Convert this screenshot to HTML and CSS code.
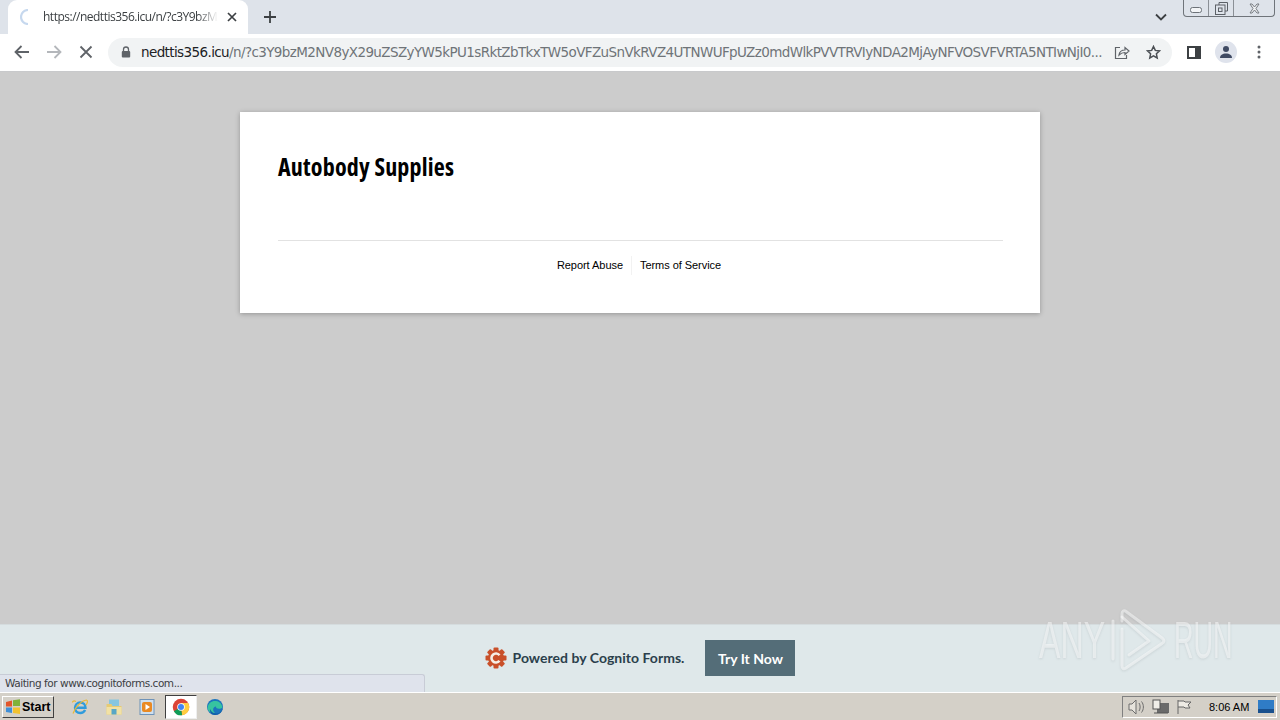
FILE: index.html
```html
<!DOCTYPE html>
<html lang="en">
<head>
<meta charset="utf-8">
<title>Autobody Supplies</title>
<link rel="stylesheet" href="styles.css">
</head>
<body>
<div class="screen">
  <header class="tabstrip">
    <div class="tab">
      <svg class="spinner" width="16" height="16" viewBox="0 0 16 16"><path d="M8 1A7 7 0 0 0 8 15" fill="none" stroke="#c6d8ee" stroke-width="2.200"/></svg>
      <span class="tab-title">https://nedttis356.icu/n/?c3Y9bzM2N</span>
      <svg class="tab-close" width="10" height="10" viewBox="0 0 10 10"><path d="M1 1l8 8M9 1L1 9" stroke="#3c4043" stroke-width="1.700"/></svg>
    </div>
    <svg class="newtab" width="12" height="12" viewBox="0 0 12 12"><path d="M6 0v12M0 6h12" stroke="#3c4043" stroke-width="1.800"/></svg>
    <svg class="tabsearch" width="12" height="8" viewBox="0 0 12 8"><path d="M1 1.500l5 5 5-5" fill="none" stroke="#3c4043" stroke-width="1.800"/></svg>
  </header>
  <div class="winctl">
    <div class="winbtn btn-min"><svg width="12" height="6" viewBox="0 0 12 6"><rect x=".5" y=".5" width="11" height="5" rx="2" fill="#f2f4f6" stroke="#6d7278"/></svg></div>
    <div class="winbtn btn-max"><svg width="13" height="13" viewBox="0 0 13 13"><path d="M4 3V.5h8.500V9H10" fill="none" stroke="#5c6167"/><rect x=".5" y="3" width="9.500" height="9.500" fill="none" stroke="#5c6167"/><rect x="3.500" y="6" width="3.500" height="3.500" fill="none" stroke="#5c6167"/></svg></div>
    <div class="winbtn btn-close"><svg width="13" height="11" viewBox="0 0 13 11"><path d="M2 1h2l2.500 3L9 1h2L8 5.500l3 4.500H9L6.500 7 4 10H2l3-4.500z" fill="#eef0f2" stroke="#777c82"/></svg></div>
  </div>

  <nav class="toolbar">
    <svg class="nav-icon" width="16" height="14" viewBox="0 0 16 14"><path d="M15 7H2M7.500 1L1.500 7l6 6" fill="none" stroke="#5f6368" stroke-width="1.800"/></svg>
    <svg class="nav-icon" width="16" height="14" viewBox="0 0 16 14"><path d="M1 7h13M8.500 1l6 6-6 6" fill="none" stroke="#b4b7bb" stroke-width="1.800"/></svg>
    <svg class="nav-icon" width="14" height="14" viewBox="0 0 14 14"><path d="M1.500 1.500l11 11M12.500 1.500l-11 11" stroke="#5f6368" stroke-width="1.800"/></svg>
    <div class="omnibox">
      <svg class="lock" width="10" height="12" viewBox="0 0 10 12"><path d="M2.500 5V3.500a2.500 2.500 0 0 1 5 0V5" fill="none" stroke="#5f6368" stroke-width="1.300"/><rect x=".8" y="5" width="8.400" height="6.500" rx="1" fill="#5f6368"/></svg>
      <div class="url"><span class="url-host">nedttis356.icu</span>/n/?c3Y9bzM2NV8yX29uZSZyYW5kPU1sRktZbTkxTW5oVFZuSnVkRVZ4UTNWUFpUZz0mdWlkPVVTRVIyNDA2MjAyNFVOSVFVRTA5NTIwNjI0...</div>
      <svg class="omni-icon share" width="16" height="15" viewBox="0 0 16 15"><path d="M6 2.500H1.500v11h11V10" fill="none" stroke="#5f6368" stroke-width="1.200"/><path d="M5 10c.5-3.500 3-5 6-5V2.500L15 6l-4 3.500V7.500c-2.500 0-4.500 1-6 2.500z" fill="none" stroke="#5f6368" stroke-width="1.200"/></svg>
      <svg class="omni-icon star" width="15" height="15" viewBox="0 0 15 15"><path d="M7.500 1.500l1.800 3.900 4.200.5-3.100 2.900.8 4.200-3.700-2.100-3.700 2.100.8-4.200L1.500 5.900l4.200-.5z" fill="none" stroke="#4b4f54" stroke-width="1.500"/></svg>
    </div>
    <svg class="side-icon" width="14" height="13" viewBox="0 0 14 13"><rect x="1" y="1" width="12" height="11" fill="none" stroke="#3c4043" stroke-width="2"/><rect x="8" y="1" width="5" height="11" fill="#3c4043"/></svg>
    <div class="avatar"><svg width="14" height="12" viewBox="0 0 14 12"><circle cx="7" cy="3" r="3" fill="#3f4a63"/><path d="M1 12c0-3 2.500-4.500 6-4.500s6 1.500 6 4.500z" fill="#3f4a63"/></svg></div>
    <svg class="menu-icon" width="4" height="14" viewBox="0 0 4 14"><circle cx="2" cy="2" r="1.500" fill="#5f6368"/><circle cx="2" cy="7" r="1.500" fill="#5f6368"/><circle cx="2" cy="12" r="1.500" fill="#5f6368"/></svg>
  </nav>

  <main class="viewport">
    <section class="card">
      <h1 class="card-title">Autobody Supplies</h1>
      <footer class="card-footer">
        <a class="card-link">Report Abuse</a>
        <span class="card-sep"></span>
        <a class="card-link">Terms of Service</a>
      </footer>
    </section>
  </main>

  <aside class="banner">
    <svg class="cog" width="22" height="22" viewBox="0 0 22 22">
      <g fill="#c9502a"><circle cx="11" cy="11" r="8"/><rect x="8.500" y="0.500" width="5" height="21" rx="1"/><rect x="0.500" y="8.500" width="21" height="5" rx="1"/><rect x="8.500" y="0.500" width="5" height="21" rx="1" transform="rotate(45 11 11)"/><rect x="8.500" y="0.500" width="5" height="21" rx="1" transform="rotate(-45 11 11)"/></g>
      <path d="M14.500 8.200a4.500 4.500 0 1 0 0 5.600" fill="none" stroke="#f6efe6" stroke-width="2.600"/>
    </svg>
    <span class="banner-text">Powered by Cognito Forms.</span>
    <a class="banner-btn">Try It Now</a>
  </aside>

  <div class="status">Waiting for www.cognitoforms.com...</div>

  <div class="watermark">
    <span class="wm-any">ANY</span>
    <svg class="wm-play" width="62" height="64" viewBox="0 0 62 64"><g fill="none" stroke="#fff" stroke-opacity=".5" stroke-width="3" stroke-linejoin="round" stroke-linecap="round"><path d="M8 12v38"/><path d="M17 12V5c0-3 2-4 4-2.500L57 29c2.500 2 2.500 4 0 5.500L21 59c-2.500 1.500-4 .5-4-2.500V20"/><path d="M17 8l27 24-20 14"/></g></svg>
    <span class="wm-run">RUN</span>
  </div>

  <footer class="taskbar">
    <div class="start">
      <svg width="16" height="16" viewBox="0 0 16 16"><path d="M1 3l6-1.500V7.500H1z" fill="#e2562b"/><path d="M8 1.200l7-1V7H8z" fill="#7fb23a"/><path d="M1 8.500h6V14l-6-1z" fill="#3f8fd8"/><path d="M8 8.500h7V15l-7-1z" fill="#f2c230"/></svg>
      <span>Start</span>
    </div>
    <div class="quick">
      <span class="qi"><svg width="18" height="18" viewBox="0 0 18 18"><path d="M4 9.800h10.500C14.500 6.500 12 4.500 9.200 4.500S4 6.800 4 9.800c0 3 2.300 5.200 5.200 5.200 2.200 0 4-1.100 4.900-3" fill="none" stroke="#2f9bdc" stroke-width="2.400"/><path d="M2 15.500C4 9 11 2.500 15.500 2c1.800.5.700 3.500-.5 5M5 3.500C3 2.500 1.500 3 1.500 4.500" fill="none" stroke="#e8b838" stroke-width="1.200"/></svg></span>
      <span class="qi"><svg width="18" height="18" viewBox="0 0 18 18"><rect x="4" y="1.500" width="10" height="7" fill="#86c6e0"/><path d="M1.500 6h5l1 2h9v8.500h-15z" fill="#e6cb74"/><rect x="1.500" y="9" width="15" height="7.500" fill="#f2e1a4"/><rect x="6.500" y="11" width="5" height="5.500" fill="#58a6c6"/></svg></span>
      <span class="qi"><svg width="18" height="18" viewBox="0 0 18 18"><rect x="2" y="1.500" width="14" height="15" fill="#cfe0ef" stroke="#6f93b8"/><rect x="4" y="4" width="10" height="10" rx="2" fill="#e98a24"/><path d="M7.500 6v6l4.500-3z" fill="#fff"/></svg></span>
      <span class="qi qi-active"><svg width="18" height="18" viewBox="0 0 48 48"><circle cx="24" cy="24" r="22" fill="#db4437"/><path d="M24 24L5 35a22 22 0 0 0 22 11z" fill="#0f9d58"/><path d="M24 13h19a22 22 0 0 1-16 33z" fill="#ffcd40"/><circle cx="24" cy="24" r="10" fill="#fff"/><circle cx="24" cy="24" r="8" fill="#4285f4"/></svg></span>
      <span class="qi"><svg width="18" height="18" viewBox="0 0 18 18"><circle cx="9" cy="9" r="8" fill="#1b74bd"/><path d="M1.500 10C2 5 6 2.500 10 3c4 .5 6 3.500 6.500 6.500-2 2-7 1.500-6.500-1-3 0-4 4-1 6.500-4 .5-7-1.500-7.500-5z" fill="#37c3a0"/><path d="M16.800 10c-.5 4-3.500 7-7.800 7-3 0-5.500-3-5-6 1 3 4 4.500 6.500 4.500 3 0 5-2 6.300-5.500z" fill="#125ea8"/></svg></span>
    </div>
    <div class="tray">
      <svg width="18" height="16" viewBox="0 0 18 16"><path d="M1 5h3l4-4v14l-4-4H1z" fill="#e6e3dc" stroke="#6d6d6d"/><path d="M11 4c1.500 2 1.500 6 0 8M13.500 2.500c2.500 3 2.500 8 0 11" fill="none" stroke="#6d6d6d"/></svg>
      <svg width="18" height="16" viewBox="0 0 18 16"><rect x="5" y="4" width="12" height="10" fill="#6a6a6a"/><rect x="1" y="1" width="7" height="9" fill="#f0eee8" stroke="#555"/><path d="M2 14h14" stroke="#555"/></svg>
      <svg width="16" height="16" viewBox="0 0 16 16"><path d="M2 1v14M2 2h6l1 1h6l-3 3 2 3H9L8 8H2" fill="#eeebe4" stroke="#666"/></svg>
      <span class="clock">8:06 AM</span>
      <svg class="showdesk" width="16" height="13" viewBox="0 0 16 13"><rect width="16" height="11" fill="#2f7cc6"/><rect y="9" width="16" height="4" fill="#19508d"/></svg>
    </div>
  </footer>
</div>
</body>
</html>
```

FILE: styles.css
```css
* { box-sizing: border-box; }
html, body { margin: 0; height: 100%; overflow: hidden; }
body { font-family: "Liberation Sans", Arial, sans-serif; }
.screen { position: relative; width: 1280px; height: 720px; display: flex; flex-direction: column; background: #ccc; }

.tabstrip { height: 34px; flex: none; background: #dee3ea; display: flex; align-items: flex-end; padding-left: 8px; position: relative; }
.tab { width: 240px; height: 34px; background: #fff; border-radius: 9px 9px 0 0; display: flex; align-items: center; padding: 0 11px 0 12px; }
.spinner { flex: none; }
.tab-title { width: 175px; margin-left: 7px; white-space: nowrap; font: 12px/16px "Open Sans", sans-serif; letter-spacing: -.5px; color: #3c4043; -webkit-mask-image: linear-gradient(90deg, #000 88%, transparent); mask-image: linear-gradient(90deg, #000 88%, transparent); }
.tab-close { margin-left: 9px; flex: none; }
.newtab { margin: 0 0 11px 16px; flex: none; }
.tabsearch { margin: 0 113px 13px auto; flex: none; }

.winctl { position: absolute; top: 0; right: 5px; width: 92px; height: 17px; display: flex; border: 1px solid #6f747a; border-top: 0; border-radius: 0 0 4px 4px; }
.winbtn { display: flex; align-items: center; justify-content: center; height: 16px; }
.btn-min { width: 25px; border-right: 1px solid #8b9096; padding-top: 4px; }
.btn-max { width: 25px; border-right: 1px solid #8b9096; }
.btn-close { flex: 1; }

.toolbar { height: 38px; flex: none; background: #fff; border-bottom: 1px solid #c8c9cb; display: flex; align-items: center; padding: 0 0 1px 14px; }
.nav-icon { flex: none; margin-right: 16px; }
.nav-icon:nth-child(3) { margin: 0 15px 0 1px; }
.omnibox { width: 1064px; height: 29px; border-radius: 15px; background: #f1f3f4; display: flex; align-items: center; padding: 0 11px 0 13px; }
.lock { flex: none; margin-right: 10px; }
.url { flex: none; white-space: nowrap; font: 13.500px/20px "DejaVu Sans", sans-serif; letter-spacing: -.61px; color: #6f7478; }
.url-host { color: #202124; }
.omni-icon { flex: none; }
.share { margin-left: auto; }
.star { margin-left: 16px; }
.side-icon { flex: none; margin-left: 15px; }
.avatar { flex: none; width: 22px; height: 22px; border-radius: 50%; background: #dfe3ec; margin-left: 14px; display: flex; align-items: center; justify-content: center; }
.menu-icon { flex: none; margin-left: 20px; }

.viewport { flex: 1; min-height: 0; padding-top: 40px; background: #ccc; }
.card { width: 800px; height: 201px; margin: 0 auto; background: #fff; box-shadow: 0 1px 5px rgba(0,0,0,.28); padding: 38px 37px 0 38px; }
.card-title { margin: 0; height: 91px; border-bottom: 1px solid #e2e2e2; font: bold 24px/34px "Open Sans", sans-serif; font-stretch: 75%; letter-spacing: .2px; color: #000; }
.card-footer { display: flex; justify-content: center; align-items: center; gap: 8px; margin-top: 15px; height: 19px; padding-right: 3px; }
.card-link { font-size: 11px; line-height: 19px; letter-spacing: -.05px; color: #000; }
.card-sep { width: 1px; height: 19px; background: #f2f2f2; }

.banner { height: 68px; flex: none; background: #dfe8ea; border-top: 1px solid #d5dcde; padding-bottom: 1px; display: flex; align-items: center; justify-content: center; }
.cog { flex: none; margin-right: 6px; }
.banner-text { font: bold 14px/20px Lato, sans-serif; letter-spacing: .03px; color: #2b3f4c; margin-right: 21px; }
.banner-btn { width: 90px; height: 36px; background: #546d78; color: #fff; display: flex; align-items: center; justify-content: center; font: bold 14px Lato, sans-serif; }

.status { position: absolute; left: 0; top: 674px; width: 425px; height: 18px; background: #dfe3ec; border: 1px solid #c8ccd6; border-left: 0; border-bottom: 0; border-radius: 0 3px 0 0; padding-left: 5px; font: 10.500px/17px "DejaVu Sans", sans-serif; letter-spacing: -.46px; color: #3c4043; }

.watermark { position: absolute; left: 1037px; top: 608px; width: 200px; height: 66px; pointer-events: none; filter: drop-shadow(0 1px 1px rgba(90,100,105,.3)); }
.wm-any, .wm-run { position: absolute; top: 4px; font: 51px/58px "Liberation Sans", sans-serif; color: rgba(255,255,255,.5); transform-origin: left center; white-space: nowrap; }
.wm-any { left: 2px; transform: scaleX(.63); }
.wm-run { left: 137px; transform: scaleX(.53); }
.wm-play { position: absolute; left: 68px; top: 1px; }

.taskbar { height: 28px; flex: none; background: #d4d0c8; border-top: 1px solid #fff; display: flex; align-items: center; padding: 0 3px 0 2px; }
.start { width: 52px; height: 22px; display: flex; align-items: center; gap: 1px; padding-left: 2px; background: #d4d0c8; border: 1px solid; border-color: #fff #404040 #404040 #fff; font: bold 12.500px/18px "Liberation Sans", sans-serif; color: #000; }
.quick { display: flex; align-items: center; margin-left: 9px; }
.qi { width: 33.750px; height: 24px; display: flex; align-items: center; justify-content: center; flex: none; }
.qi-active { width: 31.750px; margin: 0 1px; background: #fff; border: 1px solid; border-color: #404040 #eee #eee #404040; }
.tray { margin-left: auto; width: 155px; height: 22px; border: 1px solid; border-color: #808080 #fff #fff #808080; display: flex; align-items: center; padding-left: 5px; gap: 6px; }
.clock { flex: none; white-space: nowrap; font-size: 11px; margin-left: 11px; color: #000; }
.showdesk { flex: none; margin-left: 3px; }
```
